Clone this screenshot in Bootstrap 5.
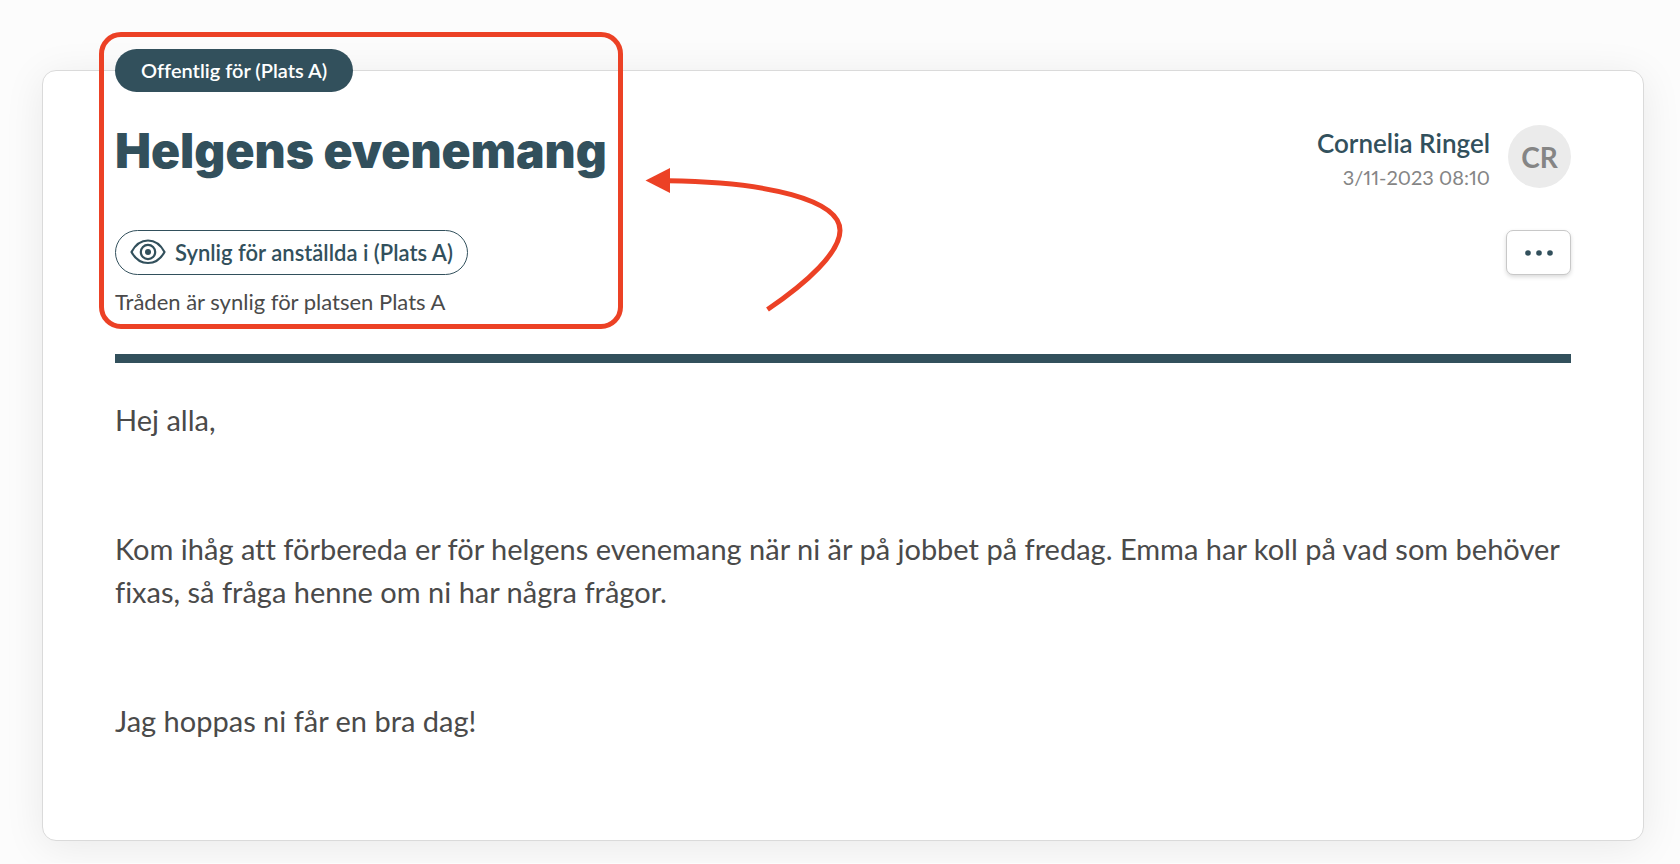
<!DOCTYPE html>
<html lang="sv">
<head>
<meta charset="utf-8">
<meta name="viewport" content="width=device-width, initial-scale=1">
<title>Helgens evenemang</title>
<link href="https://cdn.jsdelivr.net/npm/bootstrap@5.3.0/dist/css/bootstrap.min.css" rel="stylesheet">
<style>
  :root { --ink: #32505c; --mark-red: #ec4125; }
  body { background: #fcfcfc; color: #4a4a4a; font-family: Lato, "Open Sans", sans-serif; font-variant-ligatures: no-common-ligatures; }
  .page { padding: 70px 36px 22px 42px; }
  .thread { --bs-card-border-color: #dadada; border-radius: 14px; box-shadow: 0 6px 40px rgba(0, 0, 0, .08); }
  .thread-inner { padding: 0 72px 98px; }
  .ink { color: var(--ink); }
  .intro { margin-top: -22px; }
  .scope { height: 43px; padding: 0 26px 2px; background: var(--ink); font-size: 20px; }
  .title { font-family: Inter, Lato, sans-serif; font-size: 48px; line-height: 60px; font-weight: 900; margin: 29px 0 49px; }
  .visibility { height: 45px; padding: 0 14px 1px; gap: 9px; border: 1px solid var(--ink); font-size: 22px; }
  .hint { font-size: 22px; line-height: 26px; margin-top: 14px; }
  .highlight { inset: -17px -16px -14px; border: 5px solid var(--mark-red); border-radius: 22px; }
  .pointer { left: 100%; top: 119px; margin-left: 38px; }
  .meta { padding-top: 54px; }
  .author-lines { margin-right: 18px; }
  .author { font-size: 26px; line-height: 36px; font-weight: 600; }
  .stamp { font-size: 20px; line-height: 32px; color: #858585; font-variant-numeric: proportional-nums; }
  .avatar { width: 63px; height: 63px; background: #ebebeb; color: #858585; font-size: 28px; font-weight: 700; }
  .more { width: 65px; height: 45px; margin-top: 37px; border: 1px solid #c8c8c8; border-radius: 7px; box-shadow: 0 2px 4px rgba(0, 0, 0, .15); }
  .rule { height: 9px; margin: 39px 0 35px; background: var(--ink); opacity: 1; border: 0; }
  .message { font-size: 29px; line-height: 43px; }
  .message p { margin-bottom: 86px; }
  .message p:last-child { margin-bottom: 0; }
</style>
</head>
<body>
<main class="page">
  <article class="card thread">
    <div class="thread-inner">
      <header class="d-flex justify-content-between align-items-start">
        <div class="intro position-relative d-flex flex-column align-items-start">
          <span class="scope rounded-pill text-white fw-semibold d-inline-flex align-items-center">Offentlig för (Plats A)</span>
          <h1 class="title ink text-nowrap">Helgens evenemang</h1>
          <span class="visibility ink rounded-pill fw-semibold d-inline-flex align-items-center">
            <svg width="36" height="26" viewBox="0 0 36 26" fill="none" stroke="currentColor" stroke-width="2.2" stroke-linejoin="round" aria-hidden="true">
              <path d="M1.5 13C5.5 5.500 11 1.500 18 1.500S30.500 5.500 34.500 13C30.500 20.500 25 24 18 24S5.500 20.500 1.500 13Z"/>
              <circle cx="18" cy="13" r="7.200"/>
              <circle cx="18" cy="13" r="3" fill="currentColor" stroke="none"/>
            </svg>
            Synlig för anställda i (Plats A)
          </span>
          <p class="hint mb-0">Tråden är synlig för platsen Plats A</p>
          <div class="highlight position-absolute pe-none"></div>
          <svg class="pointer position-absolute" width="198" height="144" viewBox="645 168 198 144" fill="none" aria-hidden="true">
            <path d="M668 180.800C768 182 840 200 840 230.500C840 252 808 282 767.500 309.500" stroke="#ec4125" stroke-width="5"/>
            <path d="M645.500 180.500L670 168V193Z" fill="#ec4125"/>
          </svg>
        </div>
        <div class="meta d-flex flex-column align-items-end">
          <div class="d-flex align-items-start text-end">
            <div class="author-lines">
              <div class="author ink">Cornelia Ringel</div>
              <div class="stamp">3/11-2023 08:10</div>
            </div>
            <div class="avatar rounded-circle d-flex align-items-center justify-content-center">CR</div>
          </div>
          <button type="button" class="more ink bg-white d-flex align-items-center justify-content-center p-0" aria-label="Fler alternativ">
            <svg width="28" height="6" viewBox="0 0 28 6" fill="currentColor" aria-hidden="true"><circle cx="3" cy="3" r="2.800"/><circle cx="14" cy="3" r="2.800"/><circle cx="25" cy="3" r="2.800"/></svg>
          </button>
        </div>
      </header>
      <hr class="rule">
      <div class="message">
        <p>Hej alla,</p>
        <p>Kom ihåg att förbereda er för helgens evenemang när ni är på jobbet på fredag. Emma har koll på vad som behöver fixas, så fråga henne om ni har några frågor.</p>
        <p>Jag hoppas ni får en bra dag!</p>
      </div>
    </div>
  </article>
</main>
<script src="https://cdn.jsdelivr.net/npm/bootstrap@5.3.0/dist/js/bootstrap.bundle.min.js"></script>
</body>
</html>
